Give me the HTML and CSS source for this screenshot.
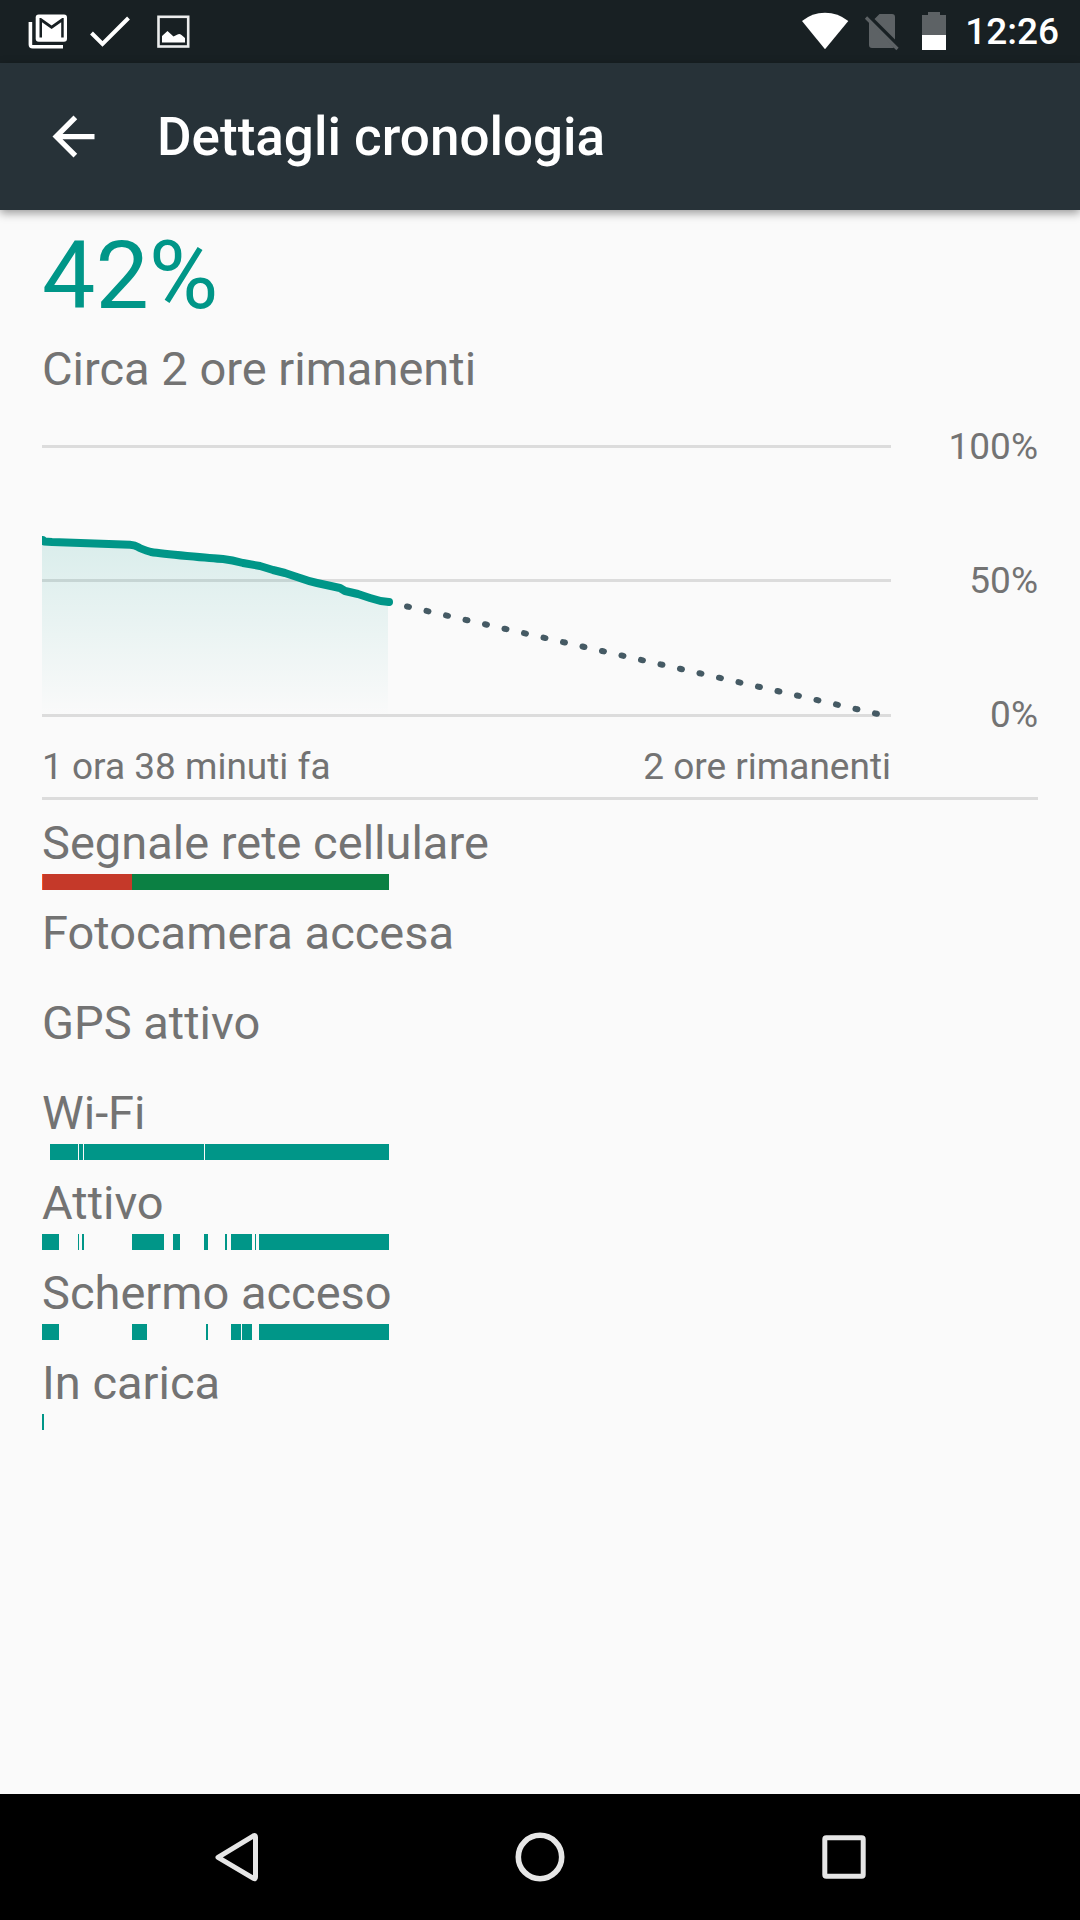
FILE: index.html
```html
<!DOCTYPE html>
<html lang="it">
<head>
<meta charset="utf-8">
<meta name="viewport" content="width=device-width, initial-scale=1">
<title>Dettagli cronologia</title>
<link rel="stylesheet" href="styles.css">
</head>
<body>
<div class="status-bar">
  <div class="status-group notifications">
    <svg class="status-icon" viewBox="0 0 48 63" aria-hidden="true">
      <path d="M6.400 22v22.500q0 2.300 2.300 2.300H39" fill="none" stroke="#fff" stroke-width="3.600"/>
      <rect x="11.700" y="14.500" width="31.300" height="27.300" rx="3" fill="#fff"/>
      <path d="M15.500 37.500V18h1.500l10.600 7.600L38.200 18h1.500v19.500h-2.500V22.300l-9.600 6.700-9.600-6.700v15.200z" fill="#182023"/>
    </svg>
    <svg class="status-icon" viewBox="0 0 48 63" aria-hidden="true">
      <path d="M4.500 33L15.500 44 41.500 18" fill="none" stroke="#fff" stroke-width="4"/>
    </svg>
    <svg class="status-icon" viewBox="0 0 48 63" aria-hidden="true">
      <rect x="8.500" y="16.800" width="29.700" height="29.700" fill="none" stroke="#eceded" stroke-width="2.600"/>
      <path d="M12 42.500V36l5.500-5 6 5.500 4-2q2-1 4 .5L35 38v4.500z" fill="#fff"/>
    </svg>
  </div>
  <div class="status-group system">
    <svg class="status-icon" viewBox="0 0 48 63" aria-hidden="true">
      <path d="M23 49.300L0 21Q10 12.700 23 12.700T46.300 21z" fill="#fff"/>
    </svg>
    <svg class="status-icon" viewBox="0 0 48 63" aria-hidden="true">
      <path d="M18.500 19L23.500 14H36q3 0 3 3v22.500zM13 21l25 26.500q-1 .5-2 .5H16q-3 0-3-3z" fill="#5d6265"/>
      <path d="M10 17.500L41.500 49" stroke="#5d6265" stroke-width="3.200"/>
    </svg>
    <svg class="status-icon" viewBox="0 0 48 63" aria-hidden="true">
      <path d="M12 15h6v-3h12v3h6v20H12z" fill="#5d6265"/>
      <path d="M12 35h24v15H12z" fill="#fff"/>
    </svg>
    <time class="clock">12:26</time>
  </div>
</div>

<header class="app-bar">
  <button class="icon-button" type="button" aria-label="Indietro">
    <svg viewBox="0 0 24 24" aria-hidden="true"><path d="M20 11H7.830l5.590-5.590L12 4l-8 8 8 8 1.410-1.410L7.830 13H20v-2z" fill="#fff"/></svg>
  </button>
  <h1 class="title">Dettagli cronologia</h1>
</header>

<main class="content">
  <p class="level">42%</p>
  <p class="remaining">Circa 2 ore rimanenti</p>

  <section class="chart">
    <svg class="plot" viewBox="0 0 849 272" preserveAspectRatio="none" role="img" aria-label="Livello batteria">
      <defs>
        <linearGradient id="area" gradientUnits="userSpaceOnUse" x1="0" y1="0" x2="0" y2="272">
          <stop offset="0" stop-color="#009688" stop-opacity=".2"/>
          <stop offset="1" stop-color="#009688" stop-opacity="0"/>
        </linearGradient>
      </defs>
      <path d="M0 0h849v3H0zM0 134h849v3H0zM0 269h849v3H0z" fill="#dcdcdc"/>
      <path d="M0 96L10 97 88 99.700 95 101 111 107 145 111 181 114 218 121 243 128 258 133 275 138 298 143 316 149 338 156 346 157V269H0z" fill="url(#area)"/>
      <path d="M345.500 157L836 269" fill="none" stroke="#455a64" stroke-width="6" stroke-linecap="round" stroke-dasharray="2 18"/>
      <path d="M0 95H1L2 96.500 10 97 88 99.700Q93 100 96 102T109 107Q118 108.500 145 111T181 114Q190 115 201 118L218 121 231 125 243 128 258 133Q266 136 275 138L298 143 303 146 316 149 328 153Q338 156.500 347 157" fill="none" stroke="#009688" stroke-width="8" stroke-linecap="round" stroke-linejoin="round"/>
    </svg>
    <div class="scale">
      <span>100%</span>
      <span>50%</span>
      <span>0%</span>
    </div>
    <div class="range">
      <span>1 ora 38 minuti fa</span>
      <span>2 ore rimanenti</span>
    </div>
  </section>

  <ul class="timeline">
    <li class="row">
      <span class="label">Segnale rete cellulare</span>
      <svg class="track" viewBox="0 0 849 16" preserveAspectRatio="none" aria-hidden="true">
        <path d="M0 0h1v16H0z" fill="#f4511e"/>
        <path d="M1 0h89v16H1z" fill="#c53929"/>
        <path d="M90 0h257v16H90z" fill="#0b8043"/>
      </svg>
    </li>
    <li class="row">
      <span class="label">Fotocamera accesa</span>
    </li>
    <li class="row">
      <span class="label">GPS attivo</span>
    </li>
    <li class="row">
      <span class="label">Wi-Fi</span>
      <svg class="track" viewBox="0 0 849 16" preserveAspectRatio="none" aria-hidden="true">
        <path d="M8 0h28v16H8zM37 0h4v16h-4zM42 0h120v16H42zM163 0h184v16H163z"/>
      </svg>
    </li>
    <li class="row">
      <span class="label">Attivo</span>
      <svg class="track" viewBox="0 0 849 16" preserveAspectRatio="none" aria-hidden="true">
        <path d="M0 0h17v16H0zM36 0h1v16h-1zM40 0h2v16h-2zM90 0h32v16H90zM131 0h7v16h-7zM162 0h4v16h-4zM183 0h2v16h-2zM189 0h21v16h-21zM213 0h1v16h-1zM217 0h130v16H217z"/>
      </svg>
    </li>
    <li class="row">
      <span class="label">Schermo acceso</span>
      <svg class="track" viewBox="0 0 849 16" preserveAspectRatio="none" aria-hidden="true">
        <path d="M0 0h17v16H0zM90 0h15v16H90zM164 0h2v16h-2zM189 0h10v16h-10zM200 0h10v16h-10zM217 0h130v16H217z"/>
      </svg>
    </li>
    <li class="row">
      <span class="label">In carica</span>
      <svg class="track" viewBox="0 0 849 16" preserveAspectRatio="none" aria-hidden="true">
        <path d="M0 0h2v16H0z"/>
      </svg>
    </li>
  </ul>
</main>

<nav class="nav-bar">
  <button class="nav-button" type="button" aria-label="Indietro">
    <svg viewBox="0 0 64 64" aria-hidden="true"><path d="M14 32.300L49.500 10.800Q51.500 9.700 51.500 12V52Q51.500 54.500 49.500 53.300L14 32.300z" fill="none" stroke="#e6e6e6" stroke-width="5" stroke-linejoin="round"/></svg>
  </button>
  <button class="nav-button" type="button" aria-label="Home">
    <svg viewBox="0 0 64 64" aria-hidden="true"><circle cx="32" cy="32" r="21.700" fill="none" stroke="#e6e6e6" stroke-width="5.600"/></svg>
  </button>
  <button class="nav-button" type="button" aria-label="Recenti">
    <svg viewBox="0 0 64 64" aria-hidden="true"><rect x="12.800" y="12.800" width="38.400" height="38.400" rx="1.500" fill="none" stroke="#e6e6e6" stroke-width="5"/></svg>
  </button>
</nav>
</body>
</html>
```

FILE: styles.css
```css
* {
  box-sizing: border-box;
}

body {
  margin: 0;
  min-height: 100vh;
  display: flex;
  flex-direction: column;
  background: #fafafa;
  color: #737373;
  font-family: Roboto, sans-serif;
}

h1, p, ul {
  margin: 0;
  padding: 0;
}

button {
  padding: 0;
  border: 0;
  background: none;
}

svg {
  display: block;
}

/* System status bar */
.status-bar {
  height: 63px;
  padding: 0 21px 0 24px;
  display: flex;
  justify-content: space-between;
  background: #182023;
}

.status-group {
  display: flex;
  align-items: center;
}

.notifications {
  gap: 15px;
}

.system {
  gap: 6px;
}

.status-icon {
  width: 48px;
  height: 63px;
}

.clock {
  margin-left: 1px;
  color: #fff;
  font-size: 37px;
  font-weight: 500;
}

/* App bar */
.app-bar {
  height: 147px;
  padding: 0 42px;
  display: flex;
  align-items: center;
  gap: 52px;
  background: #273238;
  box-shadow: 0 3px 9px rgba(0, 0, 0, .4);
}

.icon-button {
  width: 63px;
  height: 63px;
}

.title {
  color: #fff;
  font-size: 53px;
  font-weight: 500;
}

/* Battery history */
.content {
  flex: 1;
  padding: 10px 42px 42px;
}

.level {
  color: #009688;
  font-size: 95px;
  line-height: 111px;
}

.remaining {
  margin-top: 10px;
  font-size: 47px;
  line-height: 56px;
}

.chart {
  margin-top: 28px;
  padding-bottom: 9px;
  display: grid;
  grid-template-columns: 1fr 147px;
  row-gap: 8px;
  border-bottom: 3px solid #dcdcdc;
  font-size: 37px;
  line-height: 43px;
}

.plot {
  width: 100%;
  height: 272px;
  margin: 20px 0;
}

.scale {
  padding-bottom: 1px;
  display: flex;
  flex-direction: column;
  justify-content: space-between;
  text-align: right;
}

.range {
  display: flex;
  justify-content: space-between;
}

.timeline {
  padding: 15px 147px 0 0;
  list-style: none;
}

.row {
  height: 90px;
  display: flex;
  flex-direction: column;
  gap: 3px;
}

.label {
  font-size: 47px;
  line-height: 56px;
}

.track {
  width: 100%;
  height: 16px;
  fill: #009688;
}

/* System navigation bar */
.nav-bar {
  height: 126px;
  padding: 0 84px;
  display: grid;
  grid-template-columns: repeat(3, 1fr);
  background: #000;
}

.nav-button {
  display: grid;
  place-items: center;
}

.nav-button svg {
  width: 64px;
  height: 64px;
}
```
